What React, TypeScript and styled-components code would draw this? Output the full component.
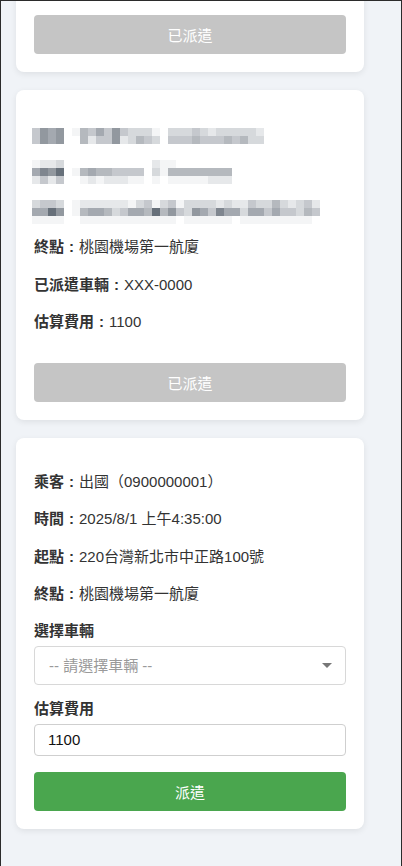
import React from "react";
import styled, { createGlobalStyle } from "styled-components";

const FONT = `"Liberation Sans", "Noto Sans CJK TC", sans-serif`;

const GlobalStyle = createGlobalStyle`
  html, body {
    margin: 0;
    padding: 0;
    background: #f0f3f7;
  }
  * {
    box-sizing: border-box;
  }
`;

const Frame = styled.div`
  height: 866px;
  border: 1px solid #2b2b2b;
  border-bottom: none;
  overflow: hidden;
  background: #f0f3f7;
  font-family: ${FONT};
  color: #333;
`;

/* the list is scrolled: the first card's top sits above the window */
const OrderList = styled.div`
  display: flex;
  flex-direction: column;
  gap: 18px;
  margin-top: -258px;
  padding: 0 37px 0 15px;
`;

const Card = styled.div`
  background: #fff;
  border-radius: 8px;
  box-shadow: 0 2px 6px rgba(0, 0, 0, 0.08);
  padding: 18px;
`;

const InfoRow = styled.p`
  margin: 15px 0;
  font-size: 15px;
  line-height: 22.5px;
  color: #333;

  strong {
    font-weight: 700;
  }
`;

// full-width colon, centred in its em box as in the zh-TW glyph
const Colon = styled.span`
  display: inline-block;
  width: 1em;
  text-align: center;
  font-weight: 700;
`;

const Mosaic = styled.svg`
  display: block;
  margin: 20px 0 -3px -2px;
`;

const FieldGroup = styled.div`
  margin-bottom: 14px;

  &:last-of-type {
    margin-bottom: 0;
  }
`;

const FieldLabel = styled.label`
  display: block;
  margin: 0 0 5px;
  font-size: 15px;
  line-height: 20px;
  font-weight: 700;
  color: #333;
`;

const SelectWrap = styled.div`
  position: relative;
`;

const VehicleSelect = styled.select`
  display: block;
  width: 100%;
  height: 39px;
  padding: 0 30px 0 14px;
  border: 1px solid #d8d8d8;
  border-radius: 4px;
  background: #fff;
  font-family: ${FONT};
  font-size: 15px;
  color: #9a9a9a;
  appearance: none;
  outline: none;
`;

const Caret = styled.span`
  position: absolute;
  right: 14px;
  top: 50%;
  margin-top: -2px;
  width: 0;
  height: 0;
  border-left: 5px solid transparent;
  border-right: 5px solid transparent;
  border-top: 5px solid #777;
  pointer-events: none;
`;

const FareInput = styled.input`
  display: block;
  width: 100%;
  height: 32px;
  padding: 0 13px;
  border: 1px solid #cfcfcf;
  border-radius: 4px;
  font-family: ${FONT};
  font-size: 15px;
  color: #111;
  outline: none;
`;

const ActionButton = styled.button<{ $done?: boolean; $gap: number }>`
  display: block;
  width: 100%;
  height: 39px;
  margin-top: ${(p) => p.$gap}px;
  border: none;
  border-radius: 4px;
  background: ${(p) => (p.$done ? "#c5c5c5" : "#4aa64e")};
  color: #fff;
  font-family: ${FONT};
  font-size: 15px;
  cursor: ${(p) => (p.$done ? "default" : "pointer")};
`;

// grey levels of the pixelated (hidden) lines
const SHADES = [
  "#ffffff",
  "#f4f5f6",
  "#e6e8ea",
  "#d6d9dc",
  "#c5c8cd",
  "#b5b9be",
  "#a4a9b0",
  "#92989f",
  "#7f868f",
  "#67707a",
];

const MOSAIC_ROWS: { y: number; cells: string }[] = [
  { y: 0, cells: "47670154647433310333432333332" },
  { y: 8, cells: "47670052447235430444544454533" },
  { y: 32, cells: "1223000000000002110000000" },
  { y: 40, cells: "6879015655444403155555555" },
  { y: 48, cells: "2424001212221101011111222" },
  { y: 72, cells: "344301222222134134133332322433532342" },
  { y: 80, cells: "669701566534665957437648663664644354" },
  { y: 88, cells: "111100111111111111011111101111111110" },
];

const PixelatedLines = () => (
  <Mosaic width={288} height={96} viewBox="0 0 288 96" shapeRendering="crispEdges">
    {MOSAIC_ROWS.map((row) =>
      row.cells.split("").map((c, i) =>
        c === "0" ? null : (
          <rect key={`${row.y}-${i}`} x={i * 8} y={row.y} width={8} height={8} fill={SHADES[Number(c)]} />
        )
      )
    )}
  </Mosaic>
);

type Row = { label: string; value: string };

const dispatchedBefore: Row[] = [
  { label: "乘客", value: "回國（0900000002）" },
  { label: "時間", value: "2025/8/1 上午3:10:00" },
  { label: "起點", value: "桃園機場第一航廈" },
  { label: "終點", value: "220台灣新北市中正路100號" },
  { label: "已派遣車輛", value: "XXX-0000" },
  { label: "估算費用", value: "1100" },
];

const dispatchedRows: Row[] = [
  { label: "終點", value: "桃園機場第一航廈" },
  { label: "已派遣車輛", value: "XXX-0000" },
  { label: "估算費用", value: "1100" },
];

const pendingRows: Row[] = [
  { label: "乘客", value: "出國（0900000001）" },
  { label: "時間", value: "2025/8/1 上午4:35:00" },
  { label: "起點", value: "220台灣新北市中正路100號" },
  { label: "終點", value: "桃園機場第一航廈" },
];

const Rows = ({ rows }: { rows: Row[] }) => (
  <>
    {rows.map((r) => (
      <InfoRow key={r.label}>
        <strong>{r.label}</strong>
        <Colon>:</Colon>
        {r.value}
      </InfoRow>
    ))}
  </>
);

export default function App() {
  return (
    <>
      <GlobalStyle />
      <Frame lang="zh-TW">
        <OrderList>
          <Card>
            <Rows rows={dispatchedBefore} />
            <ActionButton $done $gap={29} disabled>
              已派遣
            </ActionButton>
          </Card>

          <Card>
            <PixelatedLines />
            <Rows rows={dispatchedRows} />
            <ActionButton $done $gap={29} disabled>
              已派遣
            </ActionButton>
          </Card>

          <Card>
            <Rows rows={pendingRows} />
            <FieldGroup>
              <FieldLabel>選擇車輛</FieldLabel>
              <SelectWrap>
                <VehicleSelect defaultValue="">
                  <option value="">-- 請選擇車輛 --</option>
                  <option value="XXX-0000">XXX-0000</option>
                </VehicleSelect>
                <Caret />
              </SelectWrap>
            </FieldGroup>
            <FieldGroup>
              <FieldLabel>估算費用</FieldLabel>
              <FareInput type="text" defaultValue="1100" />
            </FieldGroup>
            <ActionButton $gap={16}>派遣</ActionButton>
          </Card>
        </OrderList>
      </Frame>
    </>
  );
}
